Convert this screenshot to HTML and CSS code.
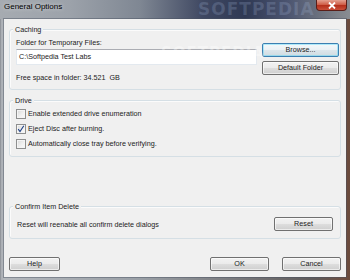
FILE: index.html
```html
<!DOCTYPE html>
<html>
<head>
<meta charset="utf-8">
<link rel="stylesheet" href="styles.css">
</head>
<body>
<div class="window">
  <div class="titlebar">
    <span class="title">General Options</span>
    <span class="watermark">SOFTPEDIA</span>
    <span class="close"><svg width="10" height="7" viewBox="0 0 10 7"><path d="M2 0.5 L8 6.5 M8 0.5 L2 6.5" stroke="#fff" stroke-width="1.8" fill="none"/></svg></span>
  </div>
  <div class="client">
    <div class="group caching">
      <span class="legend">Caching</span>
      <div class="cache-left">
        <div class="line">Folder for Temporary Files:</div>
        <div class="input">C:\Softpedia Test Labs</div>
        <div class="line free">Free space in folder: 34.521&nbsp; GB</div>
      </div>
      <div class="cache-right">
        <button class="btn focused">Browse...</button>
        <button class="btn">Default Folder</button>
      </div>
    </div>
    <div class="group drive">
      <span class="legend">Drive</span>
      <div class="check-row"><span class="box"></span>Enable extended drive enumeration</div>
      <div class="check-row"><span class="box"><svg width="8" height="8" viewBox="0 0 8 8"><path d="M1.2 4.2 L3 6.6 L6.8 0.8" stroke="#1c3f86" stroke-width="1.1" fill="none"/></svg></span>Eject Disc after burning.</div>
      <div class="check-row"><span class="box"></span>Automatically close tray before verifying.</div>
    </div>
    <div class="group confirm">
      <span class="legend">Confirm Item Delete</span>
      <span class="line">Reset will reenable all confirm delete dialogs</span>
      <button class="btn reset">Reset</button>
    </div>
    <div class="footer">
      <button class="btn help">Help</button>
      <div class="footer-right">
        <button class="btn ok">OK</button>
        <button class="btn cancel">Cancel</button>
      </div>
    </div>
    <span class="cwm">SOFTPEDIA</span>
  </div>
</div>
</body>
</html>
```

FILE: styles.css
```css
* { box-sizing: border-box; }
html, body { margin: 0; padding: 0; }
body {
  width: 350px;
  height: 280px;
  overflow: hidden;
  font-family: "Liberation Sans", Arial, sans-serif;
  font-size: 7.2px;
  color: #1b1b1b;
}
.window {
  width: 350px;
  height: 280px;
  background: linear-gradient(to right, #7d8087 0px, #a9adb3 1px, #b4b8bd 4px, #9aa0a7 40%, #5e5a5a 90%, #6e4f42 98%, #6a4a3c 100%);
  display: flex;
  flex-direction: column;
}
.titlebar {
  height: 19px;
  position: relative;
  background: linear-gradient(to right, #a6abb1 0%, #9ca2aa 20%, #7f8793 40%, #3f4862 58%, #2f3954 70%, #4b5470 82%, #6e7480 92%, #8a8d92 100%);
}
.title {
  position: absolute;
  left: 4px;
  top: 2px;
  font-size: 8px;
  line-height: 10px;
  color: #000;
  text-shadow: 0 0 4px rgba(255,255,255,0.7);
}
.watermark {
  position: absolute;
  left: 198px;
  top: 0px;
  font-size: 17px;
  font-weight: bold;
  letter-spacing: 1px;
  line-height: 19px;
  color: rgba(170, 190, 225, 0.22);
  font-family: "DejaVu Sans", sans-serif;
}
.close {
  position: absolute;
  left: 316px;
  top: 0;
  width: 31px;
  height: 11px;
  border: 1px solid #5a1e18;
  border-top: none;
  border-radius: 0 0 4px 4px;
  background: linear-gradient(to bottom, #e4a190 0%, #d0604a 45%, #b5301c 55%, #c9503a 100%);
  display: flex;
  align-items: center;
  justify-content: center;
}
.client {
  position: relative;
  margin: 0 4px 3px 4px;
  flex: 1;
  background: #f0f0f0;
  box-shadow: 0 0 0 1px rgba(70, 80, 95, 0.45);
  padding: 10px 5px 0 5px;
  display: flex;
  flex-direction: column;
}
.group {
  position: relative;
  border: 1px solid #d5dfe5;
  border-radius: 3px;
  box-shadow: inset 1px 1px 0 #fbfbfb;
}
.legend {
  position: absolute;
  left: 3px;
  top: -5px;
  padding: 0 2px;
  background: #f0f0f0;
  line-height: 9px;
}
.line { line-height: 9px; }
.caching {
  height: 61px;
  display: flex;
  padding: 0 0 0 6px;
}
.cache-left {
  width: 241px;
  padding-top: 8px;
}
.input {
  margin-top: 2px;
  height: 16px;
  background: #fff;
  border: 1px solid #e3e9ef;
  border-top-color: #abadb3;
  line-height: 14px;
  padding-left: 2px;
}
.free { margin-top: 8px; }
.cache-right {
  margin-left: 5px;
  width: 77px;
  padding-top: 13px;
  display: flex;
  flex-direction: column;
  gap: 4px;
}
.btn {
  font-family: "Liberation Sans", Arial, sans-serif;
  font-size: 7.2px;
  color: #1b1b1b;
  height: 14px;
  padding: 0;
  border: 1px solid #707070;
  border-radius: 2px;
  background: linear-gradient(to bottom, #f2f2f2 0%, #ebebeb 48%, #dddddd 52%, #cfcfcf 100%);
  box-shadow: inset 0 0 0 1px rgba(255,255,255,0.6);
  line-height: 12px;
  text-align: center;
}
.btn.focused {
  border-color: #3c7fb1;
  box-shadow: inset 0 0 0 1px #48d4fa66;
  background: linear-gradient(to bottom, #f4f8fa 0%, #eaf1f5 48%, #dde6eb 52%, #d0dbe1 100%);
}
.cache-right .btn { width: 77px; }
.drive {
  margin-top: 10px;
  height: 57px;
  padding: 6px 0 0 6px;
  display: flex;
  flex-direction: column;
  gap: 2px;
}
.check-row {
  display: flex;
  align-items: center;
  height: 13px;
  line-height: 13px;
}
.box {
  width: 10px;
  height: 10px;
  border: 1px solid #8e8f8f;
  background: linear-gradient(135deg, #d8d8d8 0%, #f1f1f1 60%, #fafafa 100%);
  box-shadow: inset 0 0 0 1px #f4f4f4;
  margin-right: 2px;
  display: flex;
  align-items: center;
  justify-content: center;
}
.confirm {
  margin-top: 49px;
  height: 33px;
  display: flex;
  align-items: center;
  justify-content: space-between;
  padding: 3px 7px 0 7px;
}
.reset { width: 59px; }
.footer {
  margin-top: 18px;
  display: flex;
  justify-content: space-between;
}
.help { width: 51px; }
.footer-right {
  display: flex;
  gap: 13px;
}
.ok, .cancel { width: 59px; }
.cwm {
  position: absolute;
  left: 157px;
  top: 25px;
  font-family: "DejaVu Sans", sans-serif;
  font-size: 15px;
  font-weight: bold;
  letter-spacing: 1px;
  color: rgba(255,255,255,0.35);
  pointer-events: none;
}
```
